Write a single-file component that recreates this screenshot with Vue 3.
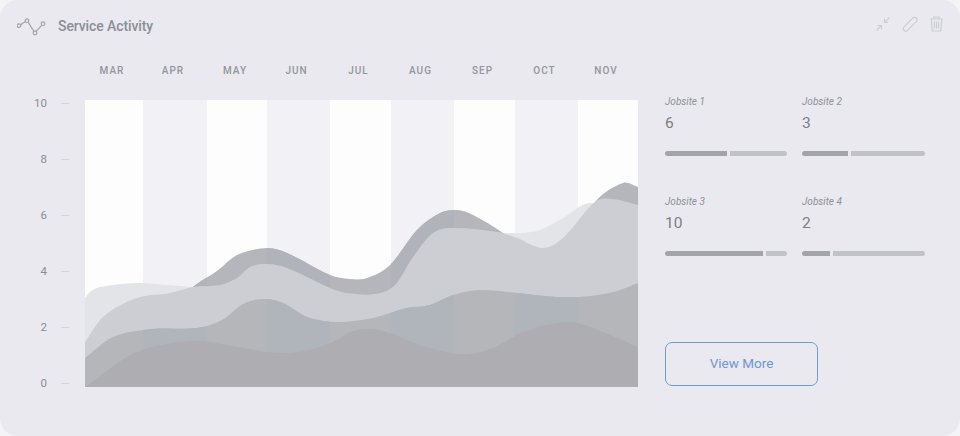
<script setup>
const months = ['MAR', 'APR', 'MAY', 'JUN', 'JUL', 'AUG', 'SEP', 'OCT', 'NOV']
const ticks = [10, 8, 6, 4, 2, 0]
const jobsites = [
  { name: 'Jobsite 1', value: 6, done: 62, rest: 58 },
  { name: 'Jobsite 2', value: 3, done: 46, rest: 74 },
  { name: 'Jobsite 3', value: 10, done: 98, rest: 22 },
  { name: 'Jobsite 4', value: 2, done: 28, rest: 92 },
]

// chart box is 553 x 287, origin at the plot's top left
const X0 = 85
const Y0 = 100
const W = 553
const H = 287

// columns, alternating white / grey
const stripes = [
  { x: 0, w: 58, alt: false },
  { x: 58, w: 64, alt: true },
  { x: 122, w: 60, alt: false },
  { x: 182, w: 63, alt: true },
  { x: 245, w: 61, alt: false },
  { x: 306, w: 63, alt: true },
  { x: 369, w: 61, alt: false },
  { x: 430, w: 63, alt: true },
  { x: 493, w: 60, alt: false },
]

// hermite through the points, slopes taken over the x distance
function area(points) {
  const p = points.map(([x, y]) => [x - X0, y - Y0])
  const slope = p.map((pt, i) => {
    const a = p[i - 1] || pt
    const b = p[i + 1] || pt
    return (b[1] - a[1]) / (b[0] - a[0])
  })
  let d = `M0 ${H} L${p[0][0]} ${p[0][1]}`
  for (let i = 0; i < p.length - 1; i++) {
    const [x1, y1] = p[i]
    const [x2, y2] = p[i + 1]
    const dx = (x2 - x1) / 3
    d += ` C${(x1 + dx).toFixed(1)} ${(y1 + slope[i] * dx).toFixed(1)} ${(x2 - dx).toFixed(1)} ${(y2 - slope[i + 1] * dx).toFixed(1)} ${x2} ${y2}`
  }
  return d + ` L${W} ${H} Z`
}

const layers = [
  {
    fill: '#e3e4e8',
    d: area([[85, 298], [90, 292], [100, 287], [137, 283], [167, 285], [190, 287], [260, 300], [400, 280], [473, 234], [503, 233], [523, 233], [540, 230], [563, 218], [590, 203], [638, 220]]),
  },
  {
    fill: '#b5b6bb',
    tint: '#b0b4ba',
    d: area([[160, 320], [193, 287], [217, 271], [237, 255], [267, 248], [287, 253], [330, 275], [350, 279], [367, 278], [390, 265], [417, 230], [440, 213], [457, 210], [473, 215], [503, 233], [543, 262], [563, 250], [595, 202], [623, 183], [638, 187]]),
  },
  {
    fill: '#cdced3',
    d: area([[85, 342], [103, 317], [137, 298], [170, 293], [193, 287], [220, 285], [237, 278], [250, 267], [267, 264], [287, 268], [330, 288], [347, 293], [375, 294], [395, 285], [413, 257], [433, 233], [453, 228], [497, 232], [517, 238], [543, 248], [563, 238], [595, 202], [613, 199], [638, 205]]),
  },
  {
    fill: '#b5b6ba',
    tint: '#b0b4bb',
    d: area([[85, 358], [113, 337], [153, 329], [197, 328], [222, 320], [243, 304], [263, 299], [283, 303], [307, 317], [337, 322], [373, 318], [407, 308], [430, 305], [453, 295], [480, 290], [517, 293], [557, 297], [590, 296], [617, 291], [638, 283]]),
  },
  {
    fill: '#aeadb1',
    d: area([[85, 387], [137, 352], [197, 341], [227, 345], [277, 353], [310, 350], [337, 340], [350, 332], [370, 329], [390, 333], [417, 344], [450, 353], [470, 354], [493, 348], [523, 332], [557, 323], [577, 323], [603, 332], [638, 347]]),
  },
]
</script>

<template>
  <div class="card">
    <header class="head">
      <div class="title">
        <svg class="trend" width="30" height="20" viewBox="0 0 30 20" fill="none">
          <path d="M3.7 8.7 L8.3 5.6 M11 6.2 L17 15.4 M19 15.4 L25 9.2" />
          <circle cx="2" cy="9.6" r="1.8" />
          <circle cx="10" cy="4.7" r="1.8" />
          <circle cx="18" cy="17" r="1.8" />
          <circle cx="26" cy="7.7" r="1.8" />
        </svg>
        <span>Service Activity</span>
      </div>
      <div class="tools">
        <svg width="16" height="16" viewBox="0 0 16 16" fill="none">
          <path d="M1.5 14.5 L6.5 9.5 M2.8 9.5 H6.5 V13.2 M14.5 1.5 L9.5 6.5 M9.5 2.8 V6.5 H13.2" />
        </svg>
        <svg width="16" height="16" viewBox="0 0 16 16" fill="none">
          <path d="M2.2 10.7 L10.4 2.3 C11.6 1 13.4 1 14.4 2 C15.4 3 15.3 4.6 14.1 5.8 L5.8 14.2 C4.7 15.3 3 15.4 2 14.4 C1 13.4 1.1 11.8 2.2 10.7 Z" />
        </svg>
        <svg width="15" height="16" viewBox="0 0 15 16" fill="none">
          <path d="M1 3 H14 M5 3 V1 H10 V3 M2.3 3 L3.2 15 H11.8 L12.7 3 M5.5 5.5 V12.5 M7.5 5.5 V12.5 M9.5 5.5 V12.5" />
        </svg>
      </div>
    </header>

    <div class="body">
      <section class="chart">
        <div class="months">
          <span v-for="(m, i) in months" :key="m" :style="{ width: stripes[i].w + 'px' }">{{ m }}</span>
        </div>
        <div class="plot-row">
          <div class="axis">
            <div v-for="t in ticks" :key="t" class="tick">
              <span class="tick-num">{{ t }}</span>
              <i class="tick-mark"></i>
            </div>
          </div>
          <svg class="plot" :width="W" :height="H" :viewBox="`0 0 ${W} ${H}`">
            <defs>
              <clipPath id="alt-cols">
                <rect v-for="s in stripes.filter(c => c.alt)" :key="s.x" :x="s.x" y="0" :width="s.w" :height="H" />
              </clipPath>
            </defs>
            <rect v-for="s in stripes" :key="s.x" :x="s.x" y="0" :width="s.w" :height="H" :fill="s.alt ? '#f2f2f6' : '#fefdfe'" />
            <g v-for="(l, i) in layers" :key="i">
              <path :d="l.d" :fill="l.fill" />
              <path v-if="l.tint" :d="l.d" :fill="l.tint" clip-path="url(#alt-cols)" />
            </g>
          </svg>
        </div>
      </section>

      <aside class="side">
        <div class="sites">
          <div v-for="j in jobsites" :key="j.name" class="site">
            <div class="site-name">{{ j.name }}</div>
            <div class="site-value">{{ j.value }}</div>
            <div class="bar">
              <i class="bar-done" :style="{ width: j.done + 'px' }"></i>
              <i class="bar-rest"></i>
            </div>
          </div>
        </div>
        <button class="more">View More</button>
      </aside>
    </div>
  </div>
</template>

<style>
html, body { background: #f4f4f7; }
</style>

<style scoped>
.card {
  width: 960px;
  height: 436px;
  box-sizing: border-box;
  background: #e9e9ef;
  border-radius: 18px;
  overflow: hidden;
  font-family: Roboto, "Liberation Sans", sans-serif;
  color: #8b8d94;
}
.head {
  display: flex;
  justify-content: space-between;
  align-items: center;
  height: 26px;
  padding: 13px 16px 0 17px;
}
.title {
  display: flex;
  align-items: center;
  gap: 11px;
  font-size: 14px;
  font-weight: 500;
  letter-spacing: -0.1px;
  color: #8c8f96;
}
.trend path, .trend circle { stroke: #a3a5ab; stroke-width: 1.2; }
.tools { display: flex; gap: 11px; align-items: center; margin-top: -4px; }
.tools svg path { stroke: #cdced5; stroke-width: 1.2; }
.body { display: flex; }
.chart { width: 638px; flex: none; }
.months {
  display: flex;
  padding: 26px 0 0 83px;
  height: 13px;
  font-size: 10px;
  font-weight: 500;
  letter-spacing: 1px;
  color: #94969c;
}
.months span { flex: none; text-align: center; }
.plot-row {
  display: flex;
  margin-top: 22px;
}
.axis {
  width: 85px;
  flex: none;
  height: 292px;
  display: flex;
  flex-direction: column;
  justify-content: space-between;
  margin-top: -3px;
}
.tick { display: flex; align-items: center; height: 12px; }
.tick-num {
  width: 47px;
  text-align: right;
  font-size: 11.5px;
  color: #8b8d94;
  line-height: 12px;
}
.tick-mark {
  width: 8px;
  height: 1px;
  margin-left: 14px;
  background: #d4d5da;
}
.plot { display: block; flex: none; }
.side {
  margin-left: 27px;
  width: 260px;
  display: flex;
  flex-direction: column;
  padding-top: 57px;
}
.sites {
  display: grid;
  grid-template-columns: 122px 123px;
  column-gap: 15px;
}
.site { height: 100px; }
.site-name {
  font-size: 10px;
  font-style: italic;
  line-height: 12px;
  color: #8f9197;
}
.site-value {
  margin-top: 6px;
  font-size: 15.5px;
  line-height: 18px;
  color: #7d7f86;
}
.bar {
  display: flex;
  gap: 3px;
  margin-top: 19px;
  height: 5px;
}
.bar-done { background: #a3a4a9; border-radius: 3px 0 0 3px; }
.bar-rest { flex: 1; background: #c1c2c8; border-radius: 0 3px 3px 0; }
.more {
  width: 153px;
  height: 44px;
  margin-top: 46px;
  padding: 0 0 2px;
  background: transparent;
  border: 1px solid #6f9bd8;
  border-radius: 7px;
  font-family: inherit;
  font-size: 13.5px;
  color: #6f97cf;
}
</style>
